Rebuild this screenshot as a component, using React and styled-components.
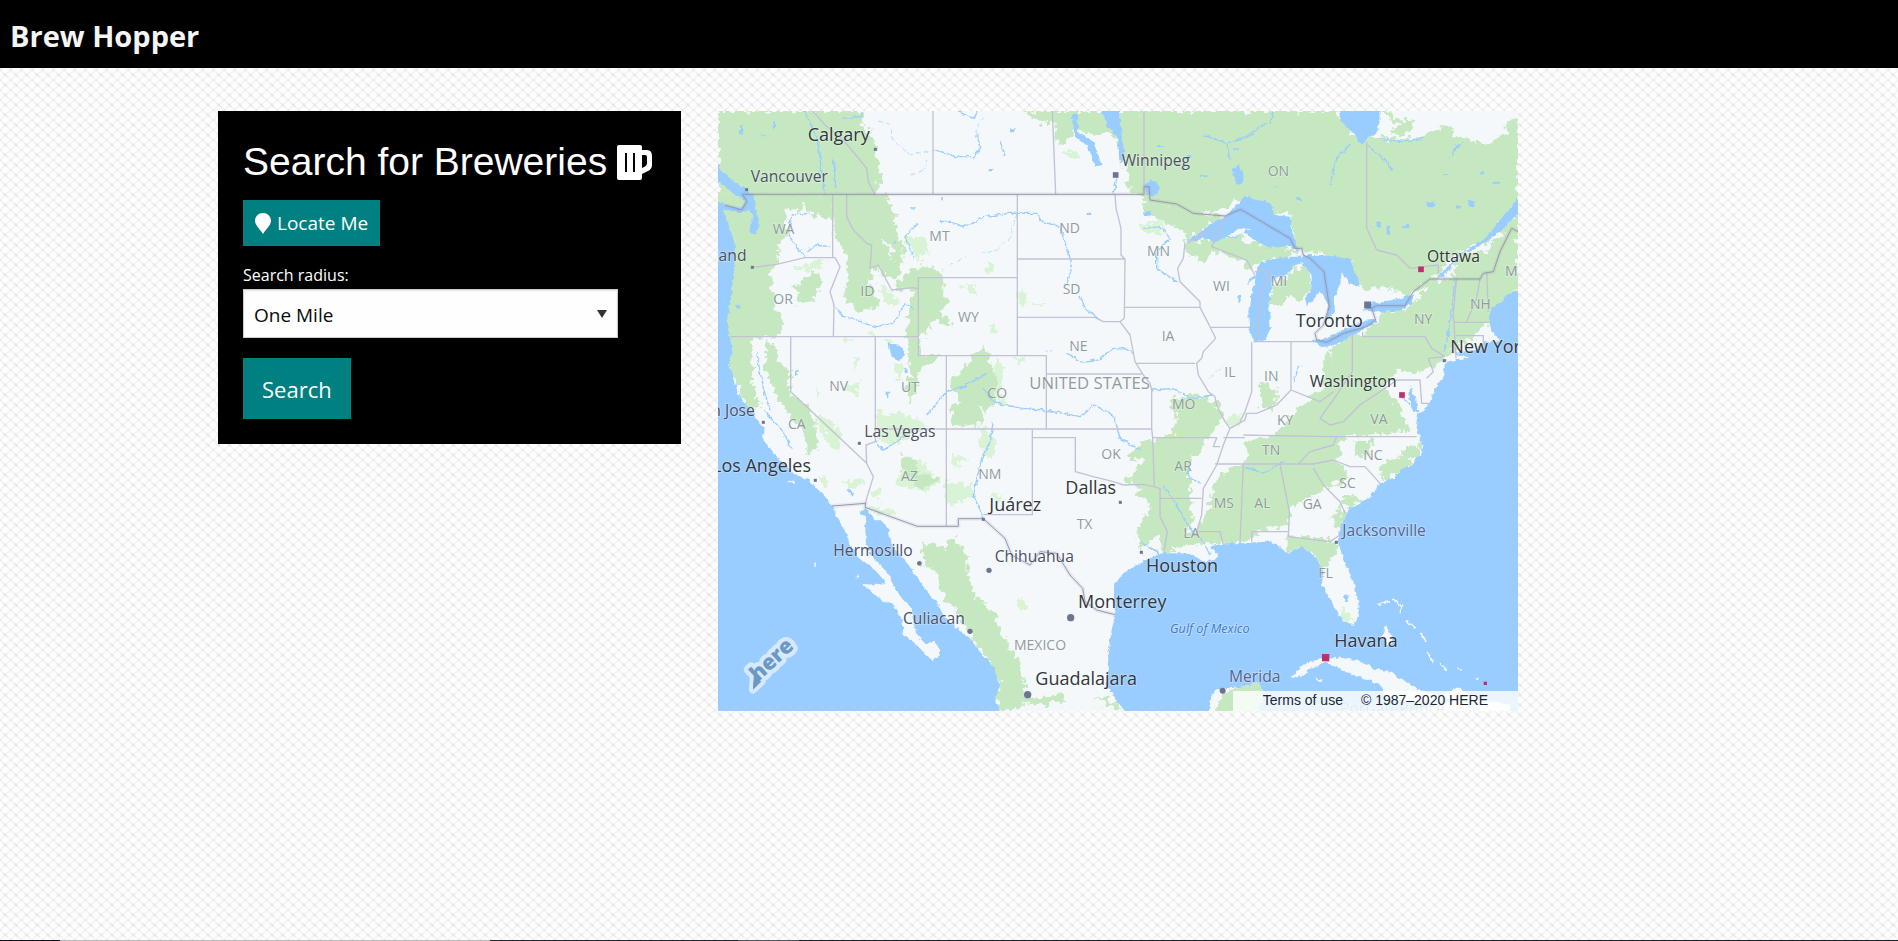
import React from "react";
import styled, { createGlobalStyle } from "styled-components";

const weave = encodeURIComponent(
  `<svg xmlns="http://www.w3.org/2000/svg" width="32" height="30" viewBox="0 0 32 30">
    <defs><pattern id="w" width="10.667" height="10" patternUnits="userSpaceOnUse">
      <path d="M-1 11 L11.667 -1" stroke="#f0f0f0" stroke-width="1.3"/>
      <path d="M-1 -1 L11.667 11" stroke="#f0f0f0" stroke-width="1.2"/>
      <path d="M3.600 3.400 L7 6.600" stroke="#e0e0e0" stroke-width="1.2"/>
      <path d="M0 0h1v1h-1z M10 0h1v1h-1z M0 9h1v1h-1z" fill="#e6e6e6"/>
    </pattern></defs>
    <rect width="32" height="30" fill="#fdfdfd"/><rect width="32" height="30" fill="url(#w)"/>
  </svg>`
);

const GlobalStyle = createGlobalStyle`
  *, *::before, *::after { box-sizing: border-box; }
  body {
    margin: 0;
    background: #fcfcfc url("data:image/svg+xml,${weave}");
    font-family: "Open Sans", "Noto Sans", sans-serif;
    color: #fff;
  }
`;

const Page = styled.div`
  display: flex;
  flex-direction: column;
  min-height: 100vh;
`;

const Header = styled.header`
  display: flex;
  align-items: center;
  height: 68px;
  padding: 4px 10px 0;
  background: #000;
`;

const Brand = styled.a`
  color: #f5f5f5;
  font-size: 29px;
  font-weight: 700;
  line-height: 40px;
  text-decoration: none;
`;

const Main = styled.main`
  display: flex;
  flex: 1;
  align-items: flex-start;
  gap: 37px;
  width: 100%;
  max-width: 1462px;
  margin: 0 auto;
  padding-top: 43px;
`;

const Panel = styled.form`
  display: flex;
  flex-direction: column;
  align-items: flex-start;
  flex: 0 0 463px;
  min-width: 0;
  padding: 25px;
  background: #000;
`;

const Title = styled.h1`
  display: flex;
  align-items: center;
  gap: 10px;
  margin: 0 0 12px;
  font: 400 39px/52px "Liberation Sans", Arial, sans-serif;
  white-space: nowrap;
`;

const Button = styled.button`
  display: flex;
  align-items: center;
  gap: 6px;
  height: ${(p) => (p.$large ? 61 : 46)}px;
  padding: 0 ${(p) => (p.$large ? 19 : 12)}px;
  border: 0;
  background: #008080;
  color: #fff;
  font-family: inherit;
  font-size: ${(p) => (p.$large ? 22 : 19)}px;
  cursor: pointer;
`;

const Label = styled.label`
  margin-top: 16px;
  font-size: 16px;
  line-height: 27px;
`;

const SelectBox = styled.div`
  display: grid;
  align-items: center;
  width: 375px;
  margin-bottom: 20px;
  > * { grid-area: 1 / 1; }
  > svg { justify-self: end; margin-right: 11px; pointer-events: none; }
`;

const Select = styled.select`
  width: 100%;
  height: 49px;
  padding: 2px 10px 0;
  border: 1px solid #ccc;
  border-radius: 0;
  background: #fefefe;
  box-shadow: inset 0 1px 2px rgba(10, 10, 10, 0.1);
  color: #0a0a0a;
  font-family: inherit;
  font-size: 19px;
  appearance: none;
`;

const MapFrame = styled.section`
  position: relative;
  flex: 0 1 800px;
  min-width: 0;
  > svg { display: block; width: 100%; height: auto; }
`;

const Attribution = styled.div`
  position: absolute;
  right: 0;
  bottom: 0;
  display: flex;
  gap: 18px;
  height: 20px;
  padding: 0 30px;
  background: rgba(255, 255, 255, 0.8);
  color: #1b2733;
  font: 14px/19px "Liberation Sans", Arial, sans-serif;
  white-space: nowrap;
  > a { color: inherit; text-decoration: none; }
`;

const Strip = styled.footer`
  height: 1px;
  background: linear-gradient(
    90deg,
    #10131f 0 60px,
    #b9b9b9 60px 490px,
    #1b2630 490px 738px,
    #4a565d 738px 799px,
    #15202a 799px
  );
`;

const MapText = styled.text`
  font-family: "Open Sans", "Noto Sans", sans-serif;
  font-size: ${(p) => p.$size}px;
  fill: ${(p) => p.$color};
  paint-order: stroke;
  stroke: rgba(255, 255, 255, 0.35);
  stroke-width: 5px;
`;

const forests = [
  "24,18 460,18 455,60 490,95 500,160 515,210 495,268 24,268",
  "24,268 368,268 368,340 310,335 285,295 262,320 245,300 225,325 235,385 205,420 200,470 185,500 185,560 200,620 225,665 200,695 128,700 130,760 125,840 150,900 120,930 55,780 24,600",
  "368,268 530,268 557,330 560,380 585,440 560,520 525,500 550,470 550,420 510,400 540,440 552,490 520,510 490,485 480,540 510,600 440,620 400,570 415,500 410,450 372,400",
  "600,495 640,483 700,500 700,570 715,590 690,620 725,665 680,650 650,670 640,695 630,700 628,745 695,755 625,790 625,830 605,900 590,860 600,780 588,700 600,600 605,555 545,552 575,520",
  "290,510 330,505 330,550 310,580 255,600 270,560 255,545",
  "170,710 215,745 200,770 240,800 240,870 290,900 320,950 320,1030 300,1050 280,980 230,920 190,850 160,780",
  "820,715 840,760 850,790 865,840 850,900 830,925 800,900 825,955 740,965 720,920 750,880 720,830 750,795 790,760",
  "570,1050 610,1060 625,1100 690,1120 665,1140 620,1150 600,1110 570,1090",
  "940,18 1230,18 1230,90 1150,90 1090,75 1060,120 1030,110 1040,60 990,55",
  "1215,18 1880,18 1930,90 2000,95 2070,105 2130,95 2200,60 2260,100 2330,120 2424,70 2424,300 2330,410 2240,440 2160,530 2100,570 2020,550 1940,548 1920,470 1840,450 1750,430 1745,330 1690,320 1600,275 1550,310 1460,325 1320,285 1260,265 1250,200 1220,100",
  "2010,18 2070,60 2040,85 2090,90 2120,50 2060,40 2040,18",
  "2380,50 2424,40 2424,110 2400,100",
  "1290,290 1320,285 1460,325 1545,333 1480,370 1430,410 1420,370 1350,350 1310,320",
  "1430,415 1500,400 1560,385 1620,410 1700,420 1770,440 1720,460 1640,470 1625,500 1600,470 1510,440 1470,480 1460,450 1430,450",
  "1700,540 1750,490 1800,490 1805,550 1770,590 1740,570 1710,600 1680,600 1680,560",
  "2030,620 2100,610 2160,525 2230,520 2240,440 2330,440 2424,320 2424,560 2370,600 2340,650 2280,700 2200,760 2150,800 2060,800 2020,850 2060,890 2080,930 2100,980 2010,985 1900,1000 1880,1060 1920,1120 1850,1150 1740,1210 1740,1260 1640,1280 1620,1310 1530,1310 1460,1290 1490,1220 1510,1150 1530,1110 1600,1080 1610,1010 1700,985 1760,920 1800,880 1840,850 1840,770 1900,690 1960,690",
  "1650,830 1700,850 1700,890 1670,920 1650,900",
  "1380,890 1440,865 1520,890 1540,950 1500,990 1480,1030 1440,1060 1250,1060 1290,1010 1390,990 1400,930",
  "1300,1010 1450,1010 1440,1090 1440,1180 1450,1230 1430,1280 1470,1290 1530,1310 1440,1320 1360,1350 1340,1290 1290,1340 1280,1270 1320,1200 1250,1120 1300,1070",
  "1730,1290 1860,1300 1890,1330 1860,1370 1840,1400 1800,1340 1730,1340",
  "1860,1240 1895,1200 1905,1235 1885,1280",
  "1885,1185 1940,1170 1960,1185 1915,1210",
  "1930,1010 1990,1000 1970,1060 1930,1050",
  "2010,1080 2090,1050 2110,1080 2020,1135",
  "2080,1030 2130,1020 2130,1055 2070,1060",
  "635,1310 700,1330 730,1300 760,1330 780,1420 800,1480 850,1520 880,1600 920,1660 940,1720 945,1800 870,1818 850,1780 870,1740 830,1660 780,1590 740,1520 700,1470 680,1400 640,1380",
  "940,1780 1060,1770 1070,1790 960,1800",
  "1150,1770 1200,1785 1240,1810 1190,1805",
];

const meadows = [
  "580,390 650,395 655,450 625,440 640,480 610,450",
  "500,530 540,560 575,600 540,600 510,560",
  "760,530 800,545 795,575 770,560",
  "820,485 845,475 850,505 825,505",
  "925,550 955,570 945,615 925,605",
  "970,595 1010,590 985,605",
  "830,655 870,680 860,690 840,680",
  "250,490 320,470 360,460 300,500",
  "320,920 380,960 400,1030 370,1040 330,970",
  "500,920 600,930 650,960 600,1000 540,1020 500,1000",
  "600,1050 640,1080 690,1130 650,1160 560,1140",
  "700,1130 790,1140 780,1180 720,1200",
  "730,1050 770,1060 740,1090",
  "860,750 880,800 870,860 900,900 870,910 850,850",
  "800,960 830,970 850,1000 830,1010",
  "810,1000 860,1000 850,1060 820,1050",
  "850,1180 870,1160 865,1210",
  "400,1130 470,1120 450,1150 420,1150",
  "330,1110 360,1130 340,1140",
  "485,1155 505,1150 510,1175 488,1180",
  "460,1205 540,1210 560,1230 520,1230",
  "1040,140 1100,135 1110,160 1060,155",
  "915,755 942,755 942,772 915,772",
  "1290,360 1360,355 1360,390 1310,390",
  "1550,935 1600,930 1590,960 1560,965",
  "430,750 450,760 430,800",
  "400,700 435,705 410,720",
  "475,680 495,680 490,705",
  "515,705 550,705 530,720",
  "555,770 580,780 570,830 550,810",
  "320,840 330,870 320,880",
  "400,850 450,830 440,870",
  "1890,1510 1910,1512 1930,1560 1900,1560",
  "925,1480 945,1485 940,1510 925,1505",
];

const water = [
  "24,290 42,318 60,370 75,420 72,500 62,590 50,650 60,700 68,740 55,780 75,830 85,870 120,910 138,940 160,970 160,1005 205,1060 250,1105 295,1125 325,1155 350,1180 366,1205 385,1240 410,1290 420,1320 445,1355 500,1400 525,1430 510,1440 455,1437 490,1465 520,1490 545,1495 575,1540 580,1570 578,1590 610,1610 650,1650 668,1668 690,1650 690,1635 670,1605 648,1618 620,1590 610,1550 605,1510 575,1480 545,1430 540,1410 500,1370 468,1320 465,1240 448,1220 470,1212 495,1245 520,1250 535,1270 545,1320 570,1350 600,1385 630,1430 650,1460 680,1490 700,1530 730,1560 780,1600 810,1640 850,1685 870,1740 855,1780 875,1830 0,1830 0,290",
  "0,178 24,178 40,205 75,232 105,250 130,270 135,310 148,350 140,388 120,385 130,330 110,315 90,322 45,315 0,305 0,290 24,290 60,305 90,312 108,290 70,265 35,235 0,215",
  "1255,1830 1230,1800 1210,1770 1190,1740 1195,1660 1200,1600 1215,1530 1212,1480 1212,1440 1240,1405 1280,1380 1310,1365 1350,1345 1420,1345 1450,1350 1480,1370 1510,1365 1525,1350 1500,1325 1545,1315 1600,1315 1640,1312 1680,1310 1710,1325 1730,1345 1760,1335 1775,1325 1800,1340 1825,1370 1840,1400 1835,1440 1860,1480 1880,1520 1900,1550 1935,1560 1945,1530 1945,1490 1930,1430 1905,1370 1885,1320 1885,1290 1895,1255 1915,1215 1960,1190 1990,1165 2010,1135 2050,1120 2080,1090 2100,1085 2130,1050 2140,1020 2130,1000 2118,960 2125,925 2145,915 2160,890 2175,850 2200,820 2205,770 2230,768 2280,757 2250,752 2230,745 2290,735 2330,712 2370,705 2345,680 2335,640 2345,610 2375,590 2390,570 2440,550 2440,1830",
  "1430,410 1490,365 1550,330 1585,295 1605,270 1640,285 1680,290 1695,330 1740,335 1750,400 1770,440 1730,420 1680,428 1640,410 1600,380 1580,400 1550,395 1510,415 1490,400",
  "1610,540 1640,500 1650,475 1680,465 1730,455 1780,455 1820,465 1760,475 1740,500 1715,520 1685,515 1690,530 1680,560 1678,620 1682,670 1665,705 1635,712 1618,680 1615,620 1625,560 1640,515",
  "1780,450 1840,450 1920,462 1930,490 1945,520 1950,545 1920,535 1895,505 1890,540 1872,580 1875,620 1845,650 1855,600 1830,560 1805,590 1790,600 1785,580 1805,555 1805,510 1780,480",
  "1805,705 1850,700 1920,665 1990,640 2000,652 1930,690 1870,722 1830,727",
  "1955,618 1990,592 2050,585 2110,570 2105,595 2080,615 2020,620",
  "2180,520 2240,455 2330,395 2390,320 2424,280 2440,310 2380,370 2330,412 2250,450 2200,515",
  "1880,0 1895,50 1930,85 1955,122 1975,95 2000,85 2012,40 2010,0",
  "1170,0 1225,0 1235,90 1245,160 1230,180 1222,100 1190,60",
  "1085,30 1100,20 1105,80 1150,110 1175,180 1155,185 1135,125 1095,95",
  "1565,195 1585,180 1600,200 1600,235 1580,240",
  "535,715 570,720 585,750 565,768 545,755",
  "2100,840 2115,880 2125,920 2110,925 2098,880",
  "1302,235 1340,225 1350,250 1330,275 1305,265",
  "1905,1468 1920,1475 1910,1492 1900,1480",
  "410,1152 430,1165 430,1175 412,1165",
  "2240,120 2260,110 2215,165",
  "2275,285 2300,290 2290,305 2275,300",
];

const islands = [
  "1740,1720 1770,1685 1800,1670 1840,1660 1890,1658 1940,1665 1990,1690 2040,1700 2080,1725 2120,1750 2160,1765 2210,1790 2030,1785 2012,1740 1980,1725 1930,1710 1890,1692 1850,1672 1800,1692 1770,1715",
  "1495,1830 1505,1765 1530,1750 1580,1748 1640,1735 1658,1755 1655,1790 1640,1830",
  "2200,1770 2240,1748 2310,1780 2400,1800 2400,1818 2100,1818 2230,1790",
  "2015,1595 2028,1562 2048,1600 2040,1625",
  "1815,1720 1835,1725 1830,1735",
];

const lakeIsles = "1555,392 1590,368 1618,372 1575,395";

const rivers =
  "M285 18L325 110L332 180L345 265M370 160L378 250M400 40L450 35L458 22M680 135L735 155L790 155L812 128L800 90M745 20L790 40L805 18M870 108L885 152M245 330L235 390L260 425L285 455M245 330L300 325M290 440L315 420L360 425M690 350L715 348L760 365L800 350L820 335L900 325L980 325L995 350L1050 365L1062 400L1070 430L1085 490L1070 540M1110 570L1125 610L1170 645M625 355L585 395L610 460M370 600L400 635L430 640L460 655L500 665L550 655L585 595L610 610M140 740L150 800L165 870L180 915M650 930L710 860L760 845L830 805M820 850L850 890L880 900L940 910L1000 915L1060 925L1110 935L1150 900L1210 930L1220 960L1230 1000L1290 1035M1070 745L1110 770L1135 771L1170 760L1210 730L1240 728L1270 745M850 950L840 1010L815 1060L790 1170L820 1240M1300 370L1350 365L1380 400L1340 440L1340 490L1400 530M1325 855L1390 850L1440 880L1510 870M1360 1140L1400 1200L1440 1270L1480 1310L1500 1350M1430 1090L1440 1120L1475 1135M1600 1085L1660 1105L1720 1070M1480 90L1550 115L1620 90L1670 50M1690 18L1680 55M1550 115L1560 170M1860 240L1880 160L1920 120M1970 120L2030 170L2050 200M2010 100L2070 110L2140 100M2235 525L2225 620L2205 740M2100 900L2080 880M1770 780L1750 830M160 915L220 980L245 1030M500 1010L520 1035L590 990M1290 1310L1350 1345M1220 220L1210 265";

const creeks =
  "M505 48L540 60L545 100L600 150L680 135M800 90L805 55L830 30M920 325L900 400L860 435L815 445M720 480L765 455M1010 735L1030 740M600 210L645 195L650 165M1500 820L1540 780";

const dots =
  "M900 70h14v9h-14zM835 192h12v7h-12zM1130 322h14v8h-14zM550 410h8v4h-8zM75 600h14v8h-14zM255 795h8v18h-8zM585 790h8v14h-8zM530 860h8v14h-8zM1430 150h14v8h-14zM1570 130h18v6h-18zM1340 120h24v6h-24zM1470 210h20v6h-20zM1760 280h16v8h-16zM2000 350h12v16h-12zM2030 365h10v24h-10zM2150 290h24v14h-24zM2240 300h12v10h-12zM1690 245h14v5h-14zM2080 360h20v8h-20zM2350 230h22v6h-22zM2310 200h12v8h-12zM2200 205h12v6h-12zM1300 320h22v10h-22zM1585 570h8v20h-8zM690 280h8v5h-8zM600 310h20v3h-20zM90 60h8v30h-8zM190 50h5v26h-5zM150 90h20v4h-20z";

const stateLines =
  "M669 18V268M1027 18L1037 268M310 20L345 60L400 105L450 165L470 190L475 230L495 268M368 268V458M130 487L200 478L285 458L375 458L390 485L360 560L372 600L370 695M410 268V335L430 375L470 415L485 420L480 490L505 480L545 555L610 548L625 552M60 695H625M625 518H922M625 518V752H922M922 268V752H1009V930L1009 972M922 462H1245M922 637H1155L1180 650L1230 650M242 695V860L470 1075L490 1115L470 1180L465 1200M496 695V1010L468 1020L470 1075M709 752V1263M496 972H1325M967 972V1229H820M967 998H1096V1100L1150 1115L1210 1130L1240 1140L1300 1138L1330 1145L1350 1150V1235L1372 1280L1362 1340M1009 807H1295M1215 268L1218 310L1233 370L1233 450L1245 462L1243 640L1230 650L1260 690L1275 770L1300 810L1320 835L1325 855V972L1328 998L1333 1145M1243 607H1470L1500 665L1517 700L1480 740L1475 760L1460 775L1465 810L1495 860L1515 875L1520 900L1545 950L1560 970L1540 1020L1520 1080L1480 1150L1475 1230L1460 1280H1530L1540 1320M1425 415L1420 460L1403 490L1410 530L1440 560L1470 590V607M1278 775H1455M1500 667H1645M1625 712V860L1605 920L1590 950M1630 710H1810M1743 712V855L1700 900L1640 925L1610 925L1605 945L1560 970M1328 998H1520L1510 1025H1530M1515 1077H1810M1600 990L1860 995H2120M1540 998H1605M1600 1077L1590 1315M1710 1078L1738 1220L1735 1295L1860 1310L1890 1290M1350 1180H1475M1625 1310V1280H1735M1765 1077L1800 1040L1870 1020L1880 995M1810 1077L1870 1065L1920 1085H1965L2010 1135M1810 1090L1840 1140L1890 1190L1905 1225M1545 333L1510 415L1505 425L1610 465L1635 510M1430 415L1490 380L1520 378M1635 500L1680 500L1650 570L1645 710M1927 685V800L1880 870L1830 940L1860 960L1900 950L1950 900L2040 840L2060 825H2130L2135 895L2155 895M1958 680V695H2145L2165 730L2205 755M1743 855L1830 890L1870 860M2205 755L2155 760L2170 800L2150 820M2240 520L2230 620L2238 760M2310 520L2300 580L2270 650M2330 500L2335 620M2235 652H2340M2238 692H2320V720M1970 110V370L2000 435L2060 450L2100 490L2185 480M2185 480V505M1302 18V245";

const nationalLines =
  "M45 300L95 315L110 290L98 268H1302V245H1317L1320 285L1400 297L1450 325L1545 333L1592 313L1740 400L1755 430L1775 430L1780 450L1800 460L1842 500L1858 605L1840 660L1815 685L1820 705L1850 712L1900 685L1970 665L1997 645L1985 610L2000 602H2085L2110 560L2160 522H2310L2320 505L2350 500L2370 440L2405 370L2424 380M366 1203L467 1195L465 1207L622 1264H745V1241H820L885 1300L905 1350L960 1380L990 1340L1040 1345L1080 1410L1118 1450L1125 1490L1160 1515L1215 1529";

const bahamas =
  "M2003 1498L2040 1490M2050 1482L2075 1505L2070 1525M2088 1548L2115 1570M2130 1585L2148 1608M2150 1640L2170 1670M2190 1675L2210 1695M2240 1692L2255 1695M2295 1720L2305 1723M235 1130L255 1130M315 1375V1385M443 1420V1410";

const GREY = "#919a9c";
const DARK = "#33363b";
const SLATE = "#4c5064";
const BLUE = "#55658c";

const CITY = 54;
const TOWN = 47;
const STATE = 42;
const COUNTRY = 50;

const labels = [
  ["Calgary", 293, 108, CITY, DARK],
  ["Vancouver", 122, 232, TOWN, SLATE],
  ["land", 14, 467, TOWN, SLATE],
  ["WA", 188, 387, STATE, GREY], ["MT", 658, 409, STATE, GREY], ["ND", 1048, 384, STATE, GREY],
  ["ID", 451, 572, STATE, GREY], ["OR", 190, 597, STATE, GREY], ["SD", 1058, 567, STATE, GREY],
  ["WY", 744, 651, STATE, GREY], ["NE", 1078, 738, STATE, GREY], ["NV", 358, 858, STATE, GREY],
  ["UT", 573, 861, STATE, GREY], ["CO", 832, 879, STATE, GREY], ["UNITED STATES", 958, 853, COUNTRY, GREY],
  ["Winnipeg", 1235, 183, TOWN, SLATE],
  ["ON", 1673, 213, STATE, GREY], ["MN", 1311, 452, STATE, GREY], ["WI", 1509, 557, STATE, GREY],
  ["MI", 1682, 543, STATE, GREY], ["Ottawa", 2151, 470, TOWN, DARK], ["ME", 2385, 513, STATE, GREY],
  ["NH", 2280, 611, STATE, GREY], ["NY", 2112, 656, STATE, GREY], ["Toronto", 1757, 666, CITY, DARK],
  ["New York", 2221, 743, CITY, DARK], ["Washington", 1799, 847, TOWN, DARK],
  ["IA", 1355, 707, STATE, GREY], ["IL", 1543, 816, STATE, GREY], ["IN", 1662, 828, STATE, GREY],
  ["MO", 1386, 911, STATE, GREY], ["KY", 1701, 959, STATE, GREY], ["VA", 1981, 957, STATE, GREY],
  ["n Jose", 4, 932, TOWN, SLATE], ["CA", 234, 972, STATE, GREY], ["Las Vegas", 463, 996, TOWN, SLATE],
  ["Los Angeles", 6, 1102, CITY, DARK], ["AZ", 573, 1127, STATE, GREY], ["NM", 805, 1121, STATE, GREY],
  ["OK", 1174, 1062, STATE, GREY], ["Juárez", 838, 1219, CITY, DARK], ["Dallas", 1066, 1166, CITY, DARK],
  ["TX", 1100, 1271, STATE, GREY], ["TN", 1656, 1049, STATE, GREY], ["NC", 1960, 1064, STATE, GREY],
  ["AR", 1393, 1097, STATE, GREY], ["SC", 1888, 1148, STATE, GREY], ["MS", 1511, 1209, STATE, GREY],
  ["AL", 1633, 1208, STATE, GREY], ["GA", 1778, 1212, STATE, GREY], ["LA", 1420, 1299, STATE, GREY],
  ["FL", 1825, 1419, STATE, GREY], ["Jacksonville", 1897, 1293, TOWN, BLUE],
  ["Houston", 1308, 1400, CITY, DARK], ["Hermosillo", 370, 1353, TOWN, SLATE],
  ["Chihuahua", 854, 1372, TOWN, SLATE], ["Monterrey", 1104, 1508, CITY, DARK],
  ["Culiacan", 579, 1556, TOWN, SLATE], ["MEXICO", 912, 1635, STATE, GREY],
  ["Guadalajara", 976, 1739, CITY, DARK], ["Havana", 1873, 1626, CITY, DARK],
  ["Merida", 1557, 1731, TOWN, BLUE], ["Port-au-Prince", 1890, 1828, TOWN, "#8296b0"],
];

const squares = [
  [496, 133, 9], [110, 254, 9], [127, 487, 9], [1217, 210, 17], [1973, 600, 21],
  [2203, 767, 9], [160, 952, 9], [448, 1015, 9], [316, 1126, 9], [820, 1243, 9],
  [1231, 1192, 9], [1294, 1342, 9], [1879, 1312, 9],
  [2133, 493, 17, 1], [2076, 870, 17, 1], [1847, 1658, 22, 1], [2326, 1735, 10, 1],
];

const circles = [[628, 1375, 7], [837, 1396, 8], [1082, 1538, 11], [780, 1579, 8], [953, 1769, 11], [1538, 1757, 9]];

const polys = (list, fill) => list.map((points, i) => <polygon key={i} points={points} fill={fill} />);

function MapArt() {
  return (
    <svg viewBox="24 18 2400 1800" role="img" aria-label="Map of North America">
      <defs>
        <filter id="ragged" x="-5%" y="-5%" width="110%" height="110%">
          <feTurbulence type="fractalNoise" baseFrequency="0.05" numOctaves="3" seed="4" />
          <feDisplacementMap in="SourceGraphic" scale="42" xChannelSelector="R" yChannelSelector="G" />
        </filter>
        <filter id="coast" x="-5%" y="-5%" width="110%" height="110%">
          <feTurbulence type="fractalNoise" baseFrequency="0.07" numOctaves="2" seed="9" />
          <feDisplacementMap in="SourceGraphic" scale="14" xChannelSelector="R" yChannelSelector="G" />
        </filter>
      </defs>
      <rect x="24" y="18" width="2400" height="1800" fill="#f4f8fb" />
      <g filter="url(#ragged)">
        {polys(meadows, "#d9f3d5")}
        {polys(forests, "#c6e8c1")}
      </g>
      <g filter="url(#coast)">
        {polys(water, "#99ccff")}
        {polys(islands, "#f4f8fb")}
        <polygon points={lakeIsles} fill="#f4f8fb" />
        <polygon points="1510,1830 1540,1765 1590,1745 1645,1735 1658,1755 1655,1790 1640,1830" fill="#c6e8c1" />
        <path d={dots} fill="#99ccff" />
        <path d={rivers} fill="none" stroke="#99ccff" strokeWidth="4" />
        <path d={creeks} fill="none" stroke="#b5daff" strokeWidth="3" strokeDasharray="16 8" />
        <path d={bahamas} fill="none" stroke="#f4f8fb" strokeWidth="5" />
      </g>
      <g fill="none" strokeLinejoin="round">
        <path d={stateLines} stroke="#c3c1d6" strokeWidth="4" />
        <path d={nationalLines} stroke="#80809c" strokeOpacity="0.12" strokeWidth="12" />
        <path d={nationalLines} stroke="#9a98ae" strokeWidth="3" />
      </g>
      {squares.map(([x, y, s, capital]) => (
        <rect key={`${x}-${y}`} x={x - s / 2} y={y - s / 2} width={s} height={s} fill={capital ? "#bf2f6b" : "#6d7590"} />
      ))}
      {circles.map(([x, y, r]) => <circle key={x} cx={x} cy={y} r={r} fill="#6d7590" />)}
      {labels.map(([text, x, y, size, color]) => (
        <MapText key={`${text}-${x}`} x={x} y={y} $size={size} $color={color}>{text}</MapText>
      ))}
      <MapText x="1380" y="1584" $size={38} $color="#3f78c4" fontStyle="italic">Gulf of Mexico</MapText>
      <g transform="translate(154 1722) rotate(-43)" strokeLinejoin="round">
        <path d="M-40 6L-6 -26V6Z" fill="#6b98c4" stroke="#d6e9fc" strokeWidth="24" paintOrder="stroke" />
        <text
          x="-14" y="0" fontFamily="Open Sans, sans-serif" fontSize="64" fontWeight="800"
          fill="#6b98c4" stroke="#d6e9fc" strokeWidth="26" paintOrder="stroke"
        >here</text>
        <path d="M-40 6L-6 -26V6Z" fill="#6b98c4" />
      </g>
    </svg>
  );
}

const BeerIcon = () => (
  <svg width="36" height="35" viewBox="0 0 36 35" fill="#fff" aria-hidden="true">
    <path
      fillRule="evenodd"
      d="M2 0H23Q25 0 25 2V5H30Q35 5 35 11V20Q35 24 31 26L25 29V33Q25 35 23 35H2Q0 35 0 33V2Q0 0 2 0ZM8 8V27H10V8ZM16 8V27H18V8ZM25 10V23L28 21.500Q30 20.500 30 18V12Q30 10 28 10Z"
    />
  </svg>
);

const PinIcon = () => (
  <svg width="16" height="21" viewBox="0 0 16 21" fill="#fff" aria-hidden="true">
    <path d="M8 0C3.500 0 0 3.400 0 7.800C0 12 4 15 8 21C12 15 16 12 16 7.800C16 3.400 12.500 0 8 0Z" />
  </svg>
);

export default function App() {
  return (
    <Page>
      <GlobalStyle />
      <Header>
        <Brand href="#">Brew Hopper</Brand>
      </Header>
      <Main>
        <Panel onSubmit={(e) => e.preventDefault()}>
          <Title>Search for Breweries <BeerIcon /></Title>
          <Button type="button"><PinIcon />Locate Me</Button>
          <Label htmlFor="radius">Search radius:</Label>
          <SelectBox>
            <Select id="radius" defaultValue="1">
              <option value="1">One Mile</option>
            </Select>
            <svg width="10" height="8" viewBox="0 0 10 8" aria-hidden="true"><path d="M0 0H10L5 8Z" fill="#333" /></svg>
          </SelectBox>
          <Button type="submit" $large>Search</Button>
        </Panel>
        <MapFrame>
          <MapArt />
          <Attribution>
            <a href="#terms">Terms of use</a>
            <span>© 1987–2020 HERE</span>
          </Attribution>
        </MapFrame>
      </Main>
      <Strip />
    </Page>
  );
}
